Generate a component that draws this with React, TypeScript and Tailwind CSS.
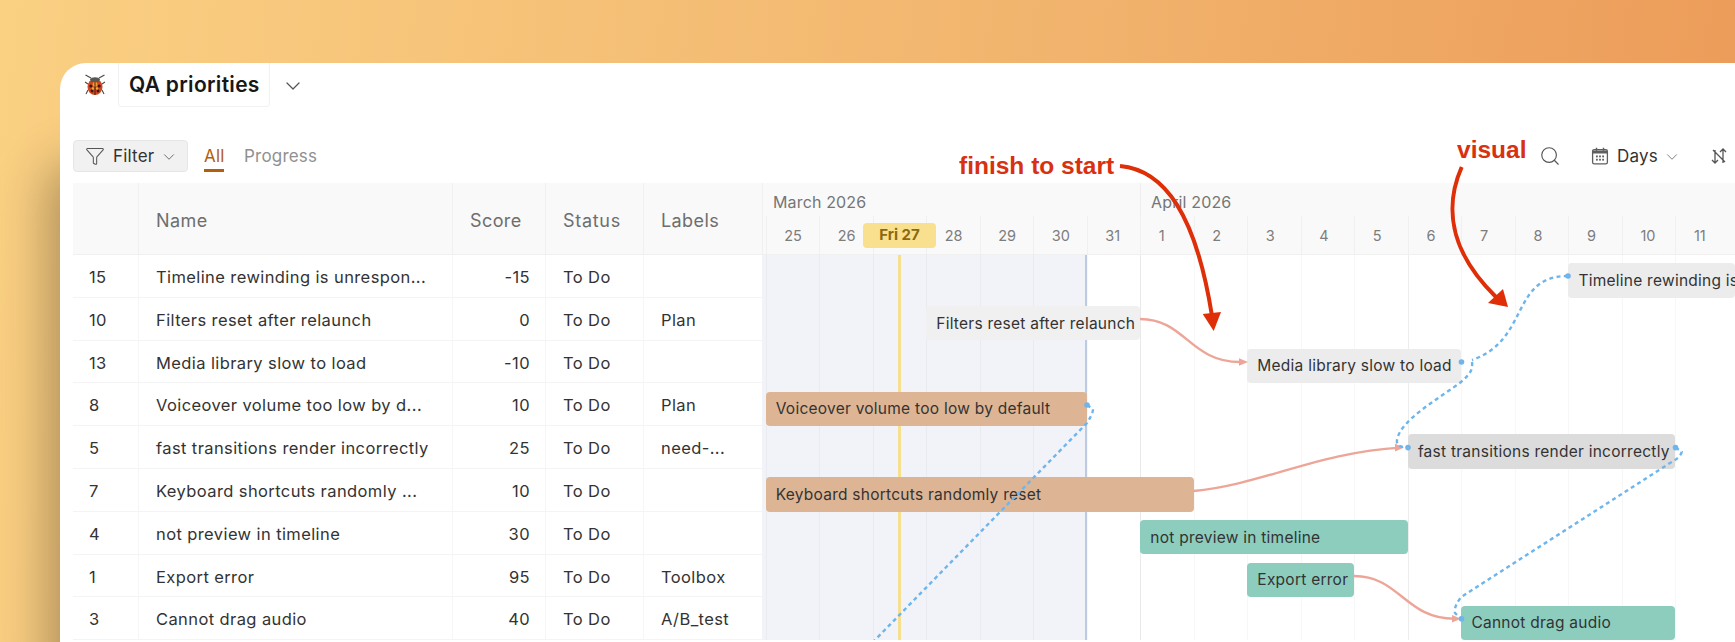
import React from "react";
import { Search, ChevronDown, Funnel } from "lucide-react";

const rows = [
  ["15", "Timeline rewinding is unrespon...", "-15", ""],
  ["10", "Filters reset after relaunch", "0", "Plan"],
  ["13", "Media library slow to load", "-10", ""],
  ["8", "Voiceover volume too low by d...", "10", "Plan"],
  ["5", "fast transitions render incorrectly", "25", "need-..."],
  ["7", "Keyboard shortcuts randomly ...", "10", ""],
  ["4", "not preview in timeline", "30", ""],
  ["1", "Export error", "95", "Toolbox"],
  ["3", "Cannot drag audio", "40", "A/B_test"],
];

const bars = [
  { t: "Timeline rewinding is unresponsive", c: "col-start-16 col-span-6 bg-[#ececec]" },
  { t: "Filters reset after relaunch", c: "col-start-4 col-span-4 bg-[#f0f0f0]" },
  { t: "Media library slow to load", c: "col-start-10 col-span-4 bg-[#ececec]" },
  { t: "Voiceover volume too low by default", c: "col-start-1 col-span-6 bg-[#deb594]" },
  { t: "fast transitions render incorrectly", c: "col-start-13 col-span-5 bg-[#dcdcdc]" },
  { t: "Keyboard shortcuts randomly reset", c: "col-start-1 col-span-8 bg-[#deb594]" },
  { t: "not preview in timeline", c: "col-start-8 col-span-5 bg-[#8ccdbe]" },
  { t: "Export error", c: "col-start-10 col-span-2 bg-[#8ccdbe]" },
  { t: "Cannot drag audio", c: "col-start-14 col-span-4 bg-[#8ccdbe]" },
];

const days = ["25", "26", "27", "28", "29", "30", "31", "1", "2", "3", "4", "5", "6", "7", "8", "9", "10", "11"];

function Ladybug() {
  return (
    <svg width="24" height="24" viewBox="0 0 24 24" fill="none">
      <path d="M8 5 2.5 2M16 5l5.5-3M5 11 2 9M19 11l3-2M5 17l-2 4M19 17l2 4" stroke="#4a4a48" strokeWidth="1.1" />
      <ellipse cx="12" cy="14" rx="7.5" ry="8" fill="#d0461f" />
      <path d="M7 6.5C8 3.5 16 3.5 17 6.5L16 9H8Z" fill="#5b5751" />
      <circle cx="12" cy="11.5" r="2.4" fill="#eda238" />
      <circle cx="7.8" cy="13" r="1.5" fill="#3a1a12" />
      <circle cx="16.2" cy="13" r="1.5" fill="#3a1a12" />
      <circle cx="9" cy="18" r="1.4" fill="#3a1a12" />
      <circle cx="15" cy="18" r="1.4" fill="#3a1a12" />
      <circle cx="10" cy="15.5" r="1.2" fill="#efa83a" />
      <circle cx="14" cy="15.5" r="1.2" fill="#efa83a" />
      <path d="M12 9v13" stroke="#3a1a12" strokeWidth="0.9" />
    </svg>
  );
}

function CalendarIcon() {
  return (
    <svg width="20" height="20" viewBox="0 0 20 20" fill="none" className="text-[#5f5f5f]">
      <rect x="2.6" y="3.6" width="14.8" height="14.2" rx="1.6" stroke="currentColor" strokeWidth="1.3" />
      <path d="M3 4.5h14V7.6H3Z" fill="currentColor" />
      <path d="M6.5 1.8v3M13.5 1.8v3" stroke="currentColor" strokeWidth="1.5" />
      <g fill="currentColor">
        <rect x="6" y="9.5" width="1.8" height="1.8" />
        <rect x="9.1" y="9.5" width="1.8" height="1.8" />
        <rect x="12.2" y="9.5" width="1.8" height="1.8" />
        <rect x="6" y="12.8" width="1.8" height="1.8" />
        <rect x="9.1" y="12.8" width="1.8" height="1.8" />
        <rect x="12.2" y="12.8" width="1.8" height="1.8" />
      </g>
    </svg>
  );
}

function Table() {
  return (
    <div className="w-[689px] shrink-0">
      <div className="flex h-[72px] items-center border-b border-[#f0f0f0] bg-[#f9f9f9] text-[18px] tracking-[0.4px] text-[#6e6e6e]">
        <div className="h-full w-[66px] border-r border-[#f0f0f0]" />
        <div className="flex h-full w-[314px] items-center border-r border-[#f0f0f0] pl-[17px] pt-[3px]">Name</div>
        <div className="flex h-full w-[93px] items-center border-r border-[#f0f0f0] pl-[17px] pt-[3px]">Score</div>
        <div className="flex h-full w-[98px] items-center border-r border-[#f0f0f0] pl-[17px] pt-[3px] tracking-[0.7px]">Status</div>
        <div className="flex h-full w-[118px] items-center pl-[17px] pt-[3px]">Labels</div>
      </div>
      {rows.map((r) => (
        <div key={r[0]} className="flex h-[42.8px] items-center border-b border-[#f4f4f4] text-[16.5px] tracking-[0.4px] text-[#333333]">
          <div className="flex h-full w-[66px] items-center border-r border-[#f6f6f6] pl-[16px] pt-[3px]">{r[0]}</div>
          <div className="flex h-full w-[314px] items-center whitespace-nowrap border-r border-[#f6f6f6] pl-[17px] pt-[3px]">{r[1]}</div>
          <div className="flex h-full w-[93px] items-center justify-end border-r border-[#f6f6f6] pr-[15px] pt-[3px]">{r[2]}</div>
          <div className="flex h-full w-[98px] items-center border-r border-[#f6f6f6] pl-[17px] pt-[3px]">To Do</div>
          <div className="flex h-full w-[118px] items-center pl-[17px] pt-[3px]">{r[3]}</div>
        </div>
      ))}
    </div>
  );
}

function GridLines() {
  return (
    <div className="absolute inset-0 grid grid-cols-[repeat(18,53.53px)] pl-[3.7px]">
      {days.map((d) => (
        <div
          key={d}
          className={
            d === "1" ? "border-l border-[#e9e9e9]" : d === "6" ? "border-l border-[#ececec]" : "border-l border-[#000000]/[0.03]"
          }
        />
      ))}
    </div>
  );
}

function Links() {
  return (
    <svg className="pointer-events-none absolute left-[-762px] top-[-255px]" width="1735" height="642" fill="none">
      <g stroke="#eda598" strokeWidth="2.4">
        <path d="M1140 319C1185 319 1190 362 1240 362" />
        <path d="M1193.5 491C1260 485 1320 452 1400 447.6" />
        <path d="M1354 576C1400 576 1405 619 1455 618.8" />
      </g>
      <g fill="#eda598">
        <path d="M1248 362l-9-3.8v7.6Z" />
        <path d="M1404 447.6l-9-3.8v7.6Z" />
        <path d="M1461 618.8l-9-3.8v7.6Z" />
      </g>
      <g stroke="#6db5ec" strokeWidth="2.4" strokeDasharray="4 3.4">
        <path d="M1568 276C1510 276 1530 340 1472 360" />
        <path d="M1472 362C1473 370 1470 374 1461 382C1440 398 1400 420 1397 440C1396 447 1402 447 1408 447.6" />
        <path d="M1087 405L1093 409C1093 413 1090 418 1087 423L873 642" />
        <path d="M1675.5 447.6L1681.7 451.7C1681 456 1676 460 1670 463L1461.7 596.7C1457 602 1454 608 1455 613L1461 618.7" />
      </g>
      <g fill="#6db5ec">
        <circle cx="1568" cy="276" r="2.8" />
        <circle cx="1461.5" cy="362" r="2.8" />
        <circle cx="1087" cy="405" r="2.8" />
        <circle cx="1408" cy="447.6" r="2.8" />
        <circle cx="1675.5" cy="447.6" r="2.8" />
        <circle cx="1461.5" cy="618.7" r="2.8" />
      </g>
    </svg>
  );
}

function Annotations() {
  return (
    <>
      <span className="absolute left-[899px] top-[85px] whitespace-nowrap font-['Liberation_Sans'] text-[24.5px] font-bold text-[#d9300f]">finish to start</span>
      <span className="absolute left-[1397px] top-[69px] font-['Liberation_Sans'] text-[24.5px] font-bold text-[#d9300f]">visual</span>
      <svg className="pointer-events-none absolute left-[-60px] top-[-63px]" width="1735" height="642" fill="none">
        <path d="M1120 166C1165 170 1196 215 1212 316" stroke="#de2f08" strokeWidth="4" />
        <path d="M1202.7 314L1221 312L1213.7 331Z" fill="#de2f08" />
        <path d="M1461.7 167C1445 205 1448 250 1496 297" stroke="#de2f08" strokeWidth="4" />
        <path d="M1488 303L1503 289L1508 307Z" fill="#de2f08" />
      </svg>
    </>
  );
}

export default function App() {
  return (
    <div className="h-[642px] w-[1735px] overflow-hidden bg-[linear-gradient(97deg,#fad083_0%,#f1b36d_60%,#ec9a58_100%)] pl-[60px] pt-[63px] font-['Inter',sans-serif]">
      <div className="relative h-[579px] w-[1675px] overflow-hidden rounded-tl-[26px] bg-white shadow-[-12px_100px_50px_rgba(0,0,0,0.3)]">
        <div className="flex h-[44px] items-start">
          <div className="ml-[23px] mt-[10px] w-[24px]"><Ladybug /></div>
          <div className="ml-[11px] flex h-[44px] w-[152px] items-center whitespace-nowrap rounded-b-[4px] border border-t-0 border-[#f2f2f2] pl-[10px] text-[21px] font-semibold tracking-[0.3px] text-[#171717]">QA priorities</div>
          <ChevronDown className="ml-[11px] mt-[11px] text-[#555555]" size={24} strokeWidth={1.25} />
        </div>
        <div className="mt-[33px] flex h-[32px] items-center pl-[13px] text-[17px] tracking-[0.2px]">
          <div className="flex h-[32px] w-[115px] items-center rounded-[4px] border border-[#e6e6e6] bg-[#f1f1f1] pl-[11px] text-[#333333]">
            <Funnel size={20} strokeWidth={1.25} className="text-[#555555]" />
            <span className="ml-[8px] pt-[2px]">Filter</span>
            <ChevronDown size={18} strokeWidth={1.25} className="ml-[6px] mt-[2px] text-[#666666]" />
          </div>
          <div className="ml-[16px] flex h-[32px] w-[20px] items-center border-b-[3px] border-[#b25f0d] pt-[5px] text-[#b25f0d]">All</div>
          <div className="ml-[20px] pt-[2px] text-[#909090]">Progress</div>
          <div className="ml-auto flex items-center pr-[7px] text-[#333333]">
            <Search size={22} strokeWidth={1.25} className="mr-[29px] text-[#555555]" />
            <CalendarIcon />
            <span className="ml-[7px] pt-[2px]">Days</span>
            <ChevronDown size={18} strokeWidth={1.25} className="ml-[5px] mt-[2px] text-[#777777]" />
            <svg className="ml-[29px] text-[#555555]" width="18" height="18" viewBox="0 0 18 18" fill="none" stroke="currentColor" strokeWidth="1.3">
              <path d="M5 3v13M2 13l3 3 3-3M13 16V2M10 5l3-3 3 3M3 3l12 12" />
            </svg>
          </div>
        </div>
        <div className="ml-[13px] mt-[11px] flex">
          <Table />
          <div className="relative flex-1 overflow-hidden">
            <div className="h-[72px] border-b border-l border-[#f0f0f0] bg-[#f9f9f9] text-[16px] tracking-[0.15px] text-[#757575]">
              <div className="flex h-[33px]">
                <div className="w-[378px] border-r border-[#eeeeee] pl-[10px] pt-[7px]">March 2026</div>
                <div className="pl-[10px] pt-[7px]">April 2026</div>
              </div>
              <div className="grid h-[39px] grid-cols-[repeat(18,53.53px)] pl-[2.7px]">
                {days.map((d) => (
                  <div key={d} className="border-l border-[#f0f0f0] pl-[17.5px] pt-[9px] text-[14.5px] tracking-normal text-[#7d7d7d]">{d === "27" ? "" : d}</div>
                ))}
              </div>
              <div className="absolute left-[101px] top-[40px] flex h-[25px] w-[73px] items-center justify-center rounded-[4px] bg-[#f8e08e] text-[15px] font-bold tracking-normal text-[#8a6a10]">Fri 27</div>
            </div>
            <div className="relative h-[385px]">
              <div className="absolute inset-y-0 left-0 w-[325px] border-r-2 border-[#bccbe2] bg-[#f1f3f9]" />
              <GridLines />
              <div className="absolute inset-y-0 left-[136px] w-[3px] bg-[#f6e08f]" />
              <div className="relative pl-[3.7px]">
                {bars.map((b) => (
                  <div key={b.t} className="grid h-[42.8px] grid-cols-[repeat(18,53.53px)] items-center">
                    <div className={`${b.c} mt-[8px] flex h-[34.4px] items-center overflow-hidden whitespace-nowrap rounded-[4px] pl-[10px] text-[15.5px] tracking-[0.25px] text-[#333333]`}>{b.t}</div>
                  </div>
                ))}
              </div>
              <Links />
            </div>
          </div>
        </div>
        <Annotations />
      </div>
    </div>
  );
}
